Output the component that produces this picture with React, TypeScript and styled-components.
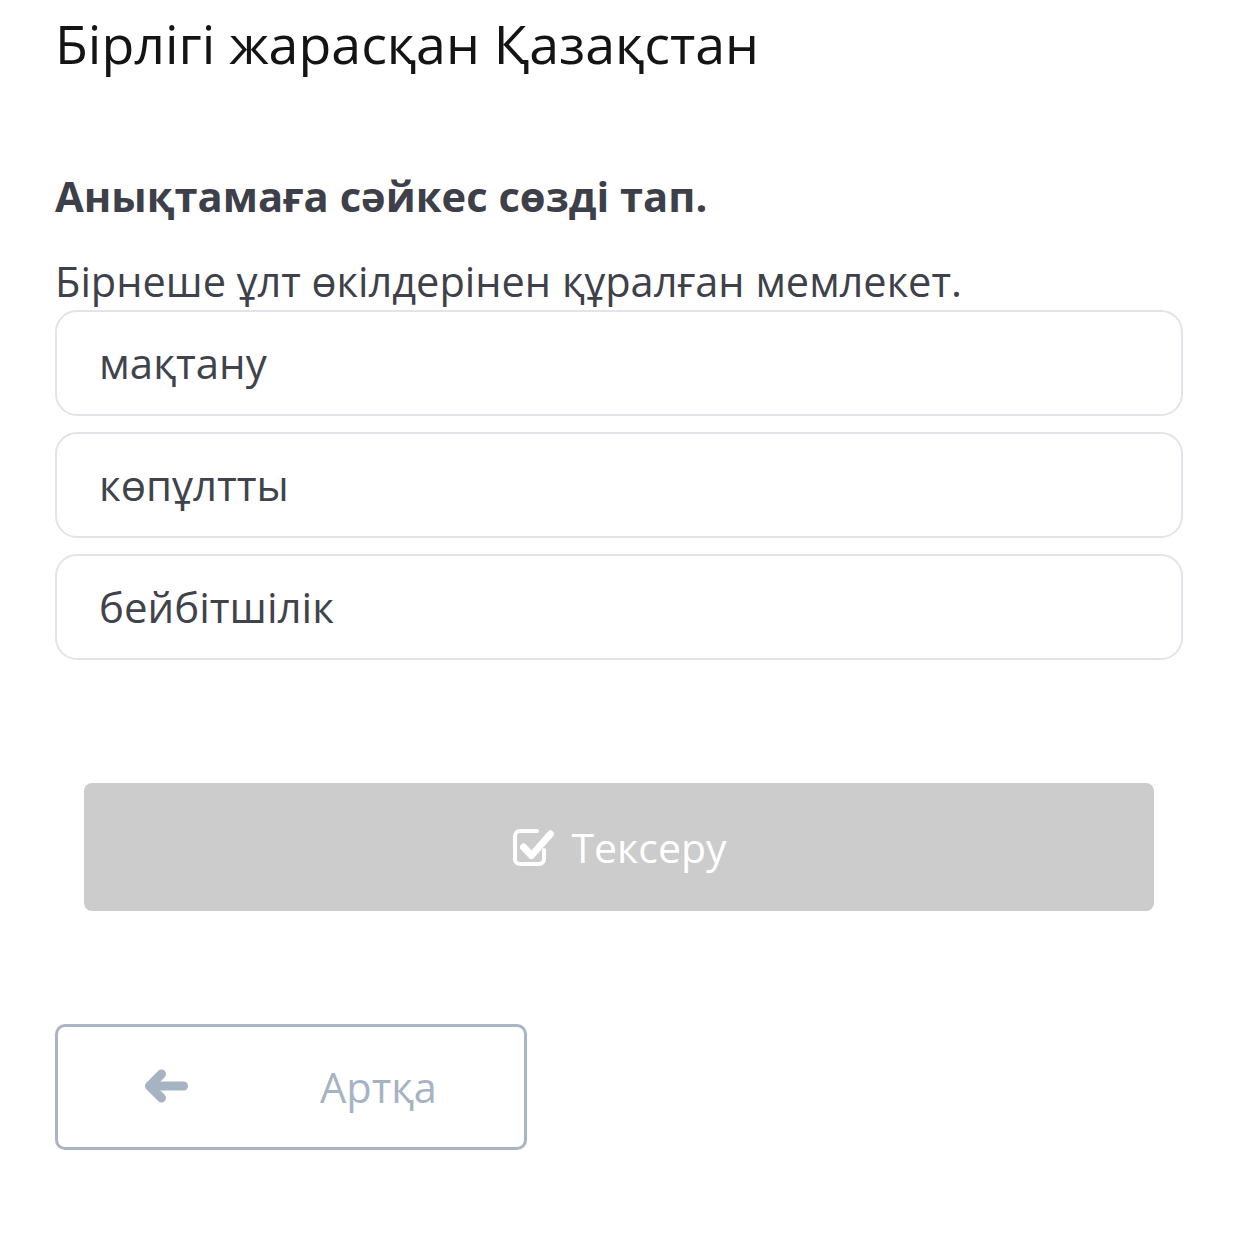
import styled, { createGlobalStyle } from 'styled-components';

const GlobalStyle = createGlobalStyle`
  html, body {
    margin: 0;
    padding: 0;
    background: #ffffff;
  }
  body {
    font-family: "Open Sans", "Noto Sans", "Liberation Sans", sans-serif;
  }
`;

const Page = styled.div`
  padding: 13px 55px 60px 55px;
  width: 1128px;
`;

const Title = styled.h1`
  margin: 0;
  font-size: 53.7px;
  line-height: 62px;
  font-weight: 400;
  color: #141414;
`;

const Question = styled.h2`
  margin: 98px 0 0;
  font-size: 41.7px;
  line-height: 46px;
  font-weight: 700;
  color: #3d4049;
`;

const Definition = styled.p`
  margin: 38px 0 0;
  font-size: 41.5px;
  line-height: 48px;
  color: #3e414a;
`;

const Options = styled.div`
  margin-top: 5px;
  display: flex;
  flex-direction: column;
  gap: 16px;
`;

const Option = styled.div`
  height: 106px;
  box-sizing: border-box;
  border: 2px solid #e3e3ea;
  border-radius: 22px;
  display: flex;
  align-items: center;
  padding-left: 42px;
  font-size: 42px;
  line-height: 48px;
  color: #40434c;
`;

const CheckButton = styled.button`
  margin: 123px 29px 0;
  width: calc(100% - 58px);
  height: 128px;
  border: none;
  border-radius: 8px;
  background: #cccccc;
  color: #ffffff;
  font-family: inherit;
  font-size: 41px;
  display: flex;
  align-items: center;
  justify-content: center;
  gap: 16px;
`;

const BackButton = styled.button`
  margin-top: 113px;
  width: 472px;
  height: 126px;
  box-sizing: border-box;
  border: 3px solid #a9b5c5;
  border-radius: 10px;
  background: #ffffff;
  color: #a6b3c3;
  font-family: inherit;
  font-size: 41.5px;
  display: flex;
  align-items: center;
  padding: 0 0 0 82px;
  gap: 128px;
`;

const CheckIcon = () => (
  <svg width="44" height="40" viewBox="0 0 44 40" fill="none" stroke="currentColor">
    <path
      d="M26 4 H9 a5 5 0 0 0 -5 5 V32 a5 5 0 0 0 5 5 H28 a5 5 0 0 0 5 -5 V23"
      strokeWidth="4"
      strokeLinecap="round"
    />
    <path d="M12.5 20 L20.5 28.5 L39.5 7" strokeWidth="7" strokeLinecap="round" strokeLinejoin="round" />
  </svg>
);

const ArrowIcon = () => (
  <svg width="52" height="44" viewBox="0 0 52 44" fill="none" stroke="currentColor">
    <path d="M10 21 H43.5" strokeWidth="9" strokeLinecap="round" />
    <path d="M21.5 9 L9.5 21 L21.5 33" strokeWidth="9" strokeLinecap="round" strokeLinejoin="round" />
  </svg>
);

const options = ['мақтану', 'көпұлтты', 'бейбітшілік'];

export default function App() {
  return (
    <>
      <GlobalStyle />
      <Page>
        <Title>Бірлігі жарасқан Қазақстан</Title>
        <Question>Анықтамаға сәйкес сөзді тап.</Question>
        <Definition>Бірнеше ұлт өкілдерінен құралған мемлекет.</Definition>
        <Options>
          {options.map(o => (
            <Option key={o}>{o}</Option>
          ))}
        </Options>
        <CheckButton>
          <CheckIcon />
          <span>Тексеру</span>
        </CheckButton>
        <BackButton>
          <ArrowIcon />
          <span>Артқа</span>
        </BackButton>
      </Page>
    </>
  );
}
